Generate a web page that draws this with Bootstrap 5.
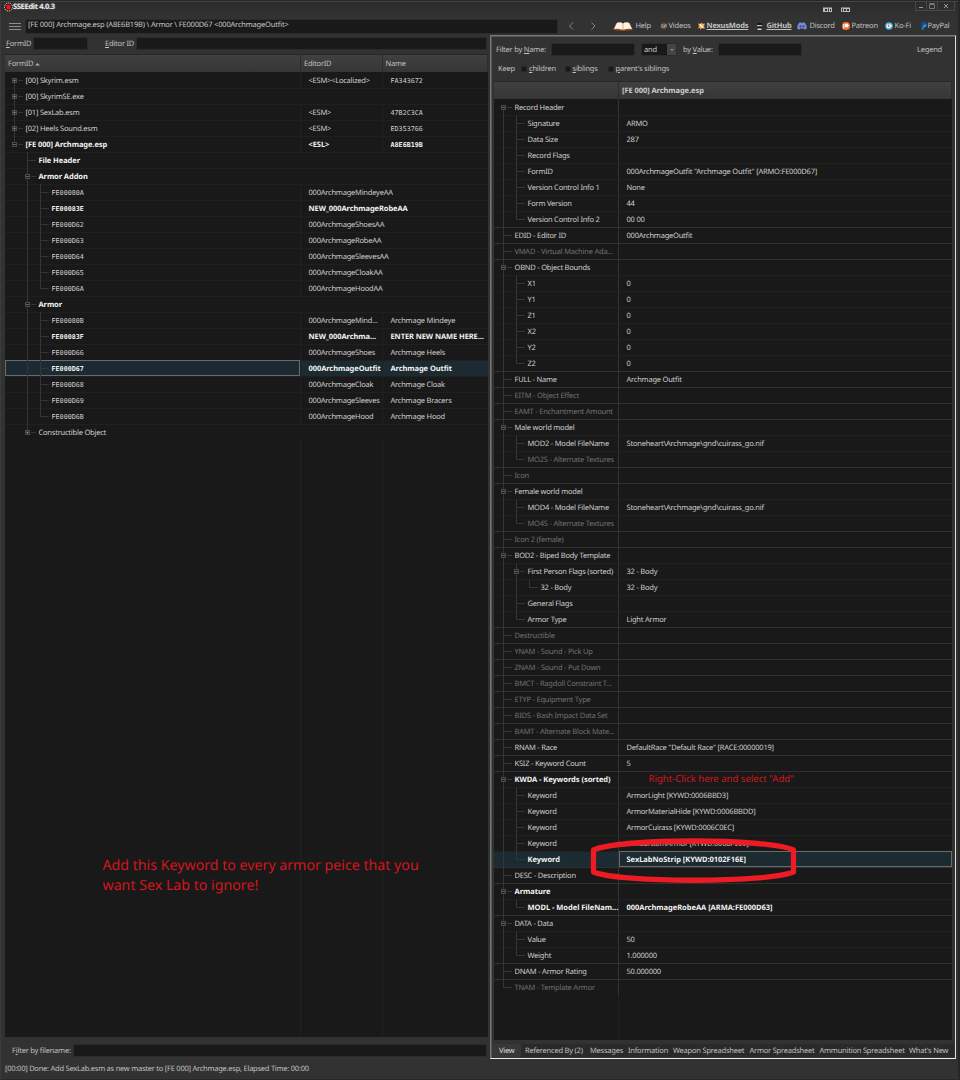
<!DOCTYPE html>
<html lang="en" data-bs-theme="dark">
<head>
<meta charset="utf-8">
<title>SSEEdit 4.0.3</title>
<meta name="viewport" content="width=device-width, initial-scale=1">
<link href="https://cdn.jsdelivr.net/npm/bootstrap@5.3.0/dist/css/bootstrap.min.css" rel="stylesheet">
<style>
html,body{height:1080px;overflow:hidden}
body{background:#323232;color:#c0c0c0;font:7.5px/16px "Noto Sans","Open Sans",sans-serif;letter-spacing:-.215px;text-rendering:geometricPrecision}
.app{width:960px;height:1080px;border:1px solid #272727;border-right-width:2px;border-left-color:#3b3b3b}
.titlebar{height:17px;border-top:1px solid #444;background:linear-gradient(#2c2c2c,#323232);padding-left:3px}
.titlebar b{color:#e8e8e8;line-height:11px;text-shadow:0 0 2px #777;letter-spacing:-.32px}
.winbtns{height:9px;border:1px solid #474747;border-top:0;margin-right:3px;margin-left:63px}
.winbtns span{width:11px;border-right:1px solid #474747;display:flex;align-items:center;justify-content:center}
.winbtns span:last-child{width:16px;border:0}
.toolbar{height:16px;padding-left:8px}
.inset{background:#191919;border:1px solid #2b2b2b;height:13px}
.links{display:grid;grid-template-columns:47px 38px 58px 41px 45px 43px 36px 32px;margin-left:15.500px;line-height:19px}
.links span{display:flex;align-items:center;white-space:nowrap}
.links svg{flex:none}
.leftpane{width:483px;margin-left:4px}
.rightpane{width:466px;height:1024px;border:1px solid #777;border-right-color:#ddd;border-bottom-color:#eee;box-shadow:inset 1px 1px #555;padding:0 3px;margin-left:2px}
.hd{height:18px;background:linear-gradient(#404040,#363636);border-top:1px solid #272727}
.hd>div{border-right:1px solid #2c2c2c;line-height:18px}
.grid{background:#191919;position:relative;overflow:hidden}
.lcols{display:grid;grid-template-columns:296px 82px 1fr}
.rcols{display:grid;grid-template-columns:125px 1fr}
.trow{height:16px;border-top:1px solid #202020;white-space:nowrap;color:#cecece;min-width:0}
.trow:first-child{border-top-color:transparent}
.trow>div{display:flex;min-width:0;margin-top:-1px;height:16px}
.lcols.trow>div,.rcols.trow>div,.fill>div{border-right:1px solid #212121}
.rcols.trow>div{border-right-color:#333}
.trow>div:last-child,.fill>div:last-child{border-right:0!important}
.trow.span>div{border-right-color:transparent!important}
.trow .val{padding-left:7.500px}
.trow .t{flex:1;line-height:18px}
.top{border-top-color:#303030}
.boldrow{font-weight:700;color:#f2f2f2;letter-spacing:-.08px}
#rec .boldrow{letter-spacing:-.03px}
.off{color:#717171}
.hot{background:#1c2a31}
.focus{box-shadow:inset 0 0 0 1px #686b6c}
.mono{font-family:"DejaVu Sans Mono",monospace;font-size:6.73px;letter-spacing:0}
.g{width:13px;height:16px;flex:none;background-repeat:no-repeat;display:flex;align-items:center}
.g.vf{background-image:linear-gradient(#353535,#353535);background-size:1px 16px;background-position:4px 0}
.g.vt{background-image:linear-gradient(#353535,#353535);background-size:1px 9px;background-position:4px 0}
.g.vb{background-image:linear-gradient(#353535,#353535);background-size:1px 8px;background-position:4px 8px}
.g i{display:block;height:1px;background:#353535;width:8px;margin:1px 0 0 5px}
.g b{width:5px;height:5px;border:1px solid #4b4b4b;background:#191919;margin:1px 0 0 2px;font-size:0;display:flex;align-items:center;justify-content:center}
.g b::after{content:"";width:3px;height:1px;background:#666}
.g b.plus::after{width:1px;height:1px;background:#aaa;box-shadow:0 0 0 .5px #777}
.g b+i{width:5px;margin-left:1px}
.padl,.padr{width:5px;flex:none}
.padl+.g{margin-left:.5px}.padl{width:4.500px}
.padr+.g{margin-left:0}
.g+.t{padding-left:2.500px}
.wide{grid-column:2/4}
.chk{width:6px;height:6px;background:#181818;border:1px solid #282828;margin-right:2px}
.tabbar{display:grid;grid-template-columns:30px 65px 38px 45px 76.5px 70px 89.5px 1fr;background:#2a2a2a;height:13px;line-height:14px;margin:4px -2px 0;white-space:nowrap}
.tabbar span:first-child{background:#383838;color:#ddd;padding-left:7px;margin-right:1px}
.tabbar span{padding-left:3px;height:13px}
.note{position:absolute;color:#d3161d;letter-spacing:0;white-space:nowrap}
.ring{position:absolute;left:585px;top:832px}
.address{width:533px;height:15px;line-height:11px;padding-left:2px;color:#c8c8c8;letter-spacing:-.18px}
</style>
</head>
<body>
<div class="app d-flex flex-column position-relative">
  <div class="titlebar d-flex">
    <svg width="9" height="10" viewBox="0 0 9 10"><circle cx="4.500" cy="5" r="4" fill="#4a1115" stroke="#ddd" stroke-dasharray="1.4 .8"/><path d="M2 4q2.500-3 5 0l-1 3.500h-3z" fill="#e01825"/></svg>
    <b>SSEEdit 4.0.3</b>
    <svg class="ms-auto" width="30" height="16"><path fill="#bbb" d="M1 5.500h9v4.500H1zM19 5.500h9v4.500h-9z"/><path fill="#333" d="M3 7h2v2H3zM6 6.500h1v3H6zM8 7h1v2H8zM20 6.500h1v3h-1zM22 7h2v2h-2zM25 7h2v2h-2z"/></svg>
    <div class="winbtns d-flex">
      <span><svg width="5" height="6"><path stroke="#999" d="M0 4.500h4"/></svg></span>
      <span><svg width="7" height="6"><path fill="none" stroke="#777" d="M.5 1.500h5v4h-5zM.5 .5h5"/></svg></span>
      <span><svg width="6" height="6"><path fill="none" stroke="#999" d="M1 1l4 4M5 1l-4 4"/></svg></span>
    </div>
  </div>
  <div class="toolbar d-flex align-items-center">
    <svg width="12" height="9"><path stroke="#999" stroke-width=".9" d="M0 1.500h12M0 4.500h12M0 7.500h12"/></svg>
    <div class="inset ms-1 address">[FE 000] Archmage.esp (A8E6B19B) \ Armor \ FE000D67 &lt;000ArchmageOutfit&gt;</div>
    <svg width="31" height="10" class="ms-2"><path fill="none" stroke="#999" stroke-width=".8" d="M7 1.500L3.500 5 7 8.500M25.500 1.500L29 5 25.500 8.500"/></svg>
    <div class="links">
      <span><svg width="20" height="9" viewBox="0 0 20 9" style="margin-right:3px"><path fill="#8b4c25" d="M0 8L3 1h14l3 7-9 1H9z"/><path fill="#fff3df" d="M1 7L4 .7Q8-.5 9.800 1.500V7.800Q5 6 1 7zM10.200 1.500Q12-.5 16 .7L19 7Q15 6 10.200 7.800z"/></svg>Help</span>
      <span><svg width="8" height="8" style="margin-right:1px"><circle cx="4" cy="4" r="3.400" fill="#57483c"/><path fill="none" stroke="#b9a694" stroke-width=".8" d="M3.500 2.700H1.700v2.600h1.700V4M4.700 6V2.700H6.300v1.600H4.700"/></svg>Videos</span>
      <span><svg width="7" height="8" viewBox="0 0 8 8" style="margin-right:2px"><path fill="#eb9b43" d="M0 1l3 .5L4 0l1.500 1.500L8 1 7 4l1 3-3-.5L3 8l-1-2-2 1 1-3z"/><path stroke="#fff" stroke-width="1.300" d="M2 2l4 4"/><path stroke="#fbe3c4" d="M6 2L2 6"/></svg><u class="fw-bold">NexusMods</u></span>
      <span><svg width="8" height="9" style="margin-right:3px"><path fill="#15191c" d="M1 1h5v2H1z"/><path fill="#e8b49b" d="M1 3h5v1.500H1z"/><path fill="#15191c" d="M1 4.500h5V6H1z"/><path fill="#b6dce8" d="M1.500 6.500h4v1.500h-4z"/></svg><u class="fw-bold">GitHub</u></span>
      <span><svg width="10" height="8" viewBox="0 0 10 8" style="margin-right:3px"><path fill="#7289da" d="M2 .7L4 .2l.3.8h1.400l.3-.8 2 .5Q10 3.500 9.800 6.500L7.500 7.800 6.800 6.600H3.200L2.500 7.800.2 6.500Q0 3.500 2 .7z"/><circle cx="3.500" cy="4.300" r=".9" fill="#333"/><circle cx="6.500" cy="4.300" r=".9" fill="#333"/></svg>Discord</span>
      <span><svg width="8" height="8" style="margin-right:2px"><rect width="8" height="8" rx="3.800" fill="#f96d2a"/><circle cx="4.600" cy="3.500" r="2" fill="#fff"/><path fill="#fff" d="M1.300 1.800h1v5h-1z"/></svg>Patreon</span>
      <span><svg width="8" height="8" style="margin-right:2px"><circle cx="4" cy="4" r="3.800" fill="#4fb4df"/><path fill="#fff" d="M1.500 2.500h4.500l1 1-1 1.500H5.500l-.5 1H2z"/><circle cx="3.700" cy="4" r=".9" fill="#e55"/></svg>Ko-Fi</span>
      <span><svg width="6" height="8" style="margin-right:1px"><path fill="#174e9b" d="M1 0h3q2 0 1.500 2.500T3 5L2.500 7H0z"/><path fill="#1aa0df" d="M2.500 3l3.200-.6q0 2.800-3 2.800L2.200 8H1z"/></svg>PayPal</span>
    </div>
  </div>
  <div class="d-flex" style="height:1024px;margin-top:1px">
    <div class="leftpane">
      <div class="d-flex align-items-center" style="height:19px;padding:0 1px 2px 1px">
        <span style="width:27px;padding-top:1px"><u>F</u>ormID</span><div class="inset" style="width:55px"></div>
        <span style="margin-left:17px;width:31px;padding-top:1px"><u>E</u>ditor ID</span><div class="inset flex-fill"></div>
      </div>
      <div class="hd lcols"><div style="padding-left:3px">FormID <svg width="5" height="4"><path fill="#aaa" d="M0 3.500L2.500 1 5 3.500z"/></svg></div><div style="padding-left:3px">EditorID</div><div style="padding-left:2.500px">Name</div></div>
      <div class="grid d-flex flex-column" style="height:965px"><div id="nav"></div><div class="fill lcols flex-fill"><div></div><div></div><div></div></div></div>
      <div class="d-flex align-items-center" style="height:15px;margin-top:6px;padding:0 1px 0 7px"><span style="width:61px">F<u>i</u>lter by filename:</span><div class="inset flex-fill"></div></div>
    </div>
    <div class="rightpane">
      <div class="d-flex align-items-center" style="height:22px;padding:4px 10px 0 2px">
        <span style="width:55px;padding-top:2px">Filter by <u>N</u>ame:</span><div class="inset" style="width:84px"></div>
        <div class="inset d-flex" style="width:36px;margin-left:6px;line-height:12px;padding-left:2px;color:#ccc">and<svg class="ms-auto" width="9" height="11"><path fill="#444" d="M0 0h9v11H0z"/><path fill="#888" d="M3 5h4L5 7z"/></svg></div>
        <span style="margin-left:6px;width:35px;padding-top:2px">by <u>V</u>alue:</span><div class="inset" style="width:84px"></div><span class="ms-auto" style="padding-top:2px">Legend</span>
      </div>
      <div class="d-flex align-items-center" style="height:22px;padding-left:4px;margin-bottom:1px;line-height:15px">
        <span style="width:23px">Keep</span>
        <i class="chk"></i><span style="width:35.500px"><u>c</u>hildren</span>
        <i class="chk"></i><span style="width:35px"><u>s</u>iblings</span>
        <i class="chk"></i><span><u>p</u>arent's siblings</span>
      </div>
      <div class="hd rcols"><div></div><div class="fw-bold" style="padding-left:3px;color:#ccc;letter-spacing:-.07px;line-height:19px">[FE 000] Archmage.esp</div></div>
      <div class="grid d-flex flex-column" style="height:941px"><div id="rec"></div><div class="fill rcols flex-fill"><div></div><div></div></div></div>
      <div class="tabbar"><span>View</span><span>Referenced By (2)</span><span>Messages</span><span>Information</span><span>Weapon Spreadsheet</span><span>Armor Spreadsheet</span><span>Ammunition Spreadsheet</span><span>What's New</span></div>
    </div>
  </div>
  <div style="padding:2px 0 0 4px;letter-spacing:-.24px">[00:00] Done: Add SexLab.esm as new master to [FE 000] Archmage.esp, Elapsed Time: 00:00</div>

  <div class="note" style="left:647.500px;top:770px;font-size:9.550px">Right-Click here and select "Add"</div>
  <div class="note" style="left:101.500px;top:855px;font-size:14.200px;line-height:20px">Add this Keyword to every armor peice that you<br>want Sex Lab to ignore!</div>
  <svg class="ring" width="215" height="56" viewBox="586 833 215 56"><path d="M593.500 850C620 838 766 838 793.500 850V872C766 883 620 883 593.500 872Z" fill="none" stroke="#ed1c24" stroke-width="5.300" stroke-linejoin="round"/></svg>
</div>
<script>
// Each row: level, marker, label, [values], flags (b bold, o unused, h highlighted, s spanning, m monospaced label)
const nav=[
[0,'+','[00] Skyrim.esm',['<ESM><Localized>','FA343672']],
[0,'+','[00] SkyrimSE.exe',[],'s'],
[0,'+','[01] SexLab.esm',['<ESM>','47B2C3CA']],
[0,'+','[02] Heels Sound.esm',['<ESM>','ED353766']],
[0,'-','[FE 000] Archmage.esp',['<ESL>','A8E6B19B'],'b'],
[1,'','File Header',[],'bs'],
[1,'-','Armor Addon',[],'bs'],
[2,'','FE00080A',['000ArchmageMindeyeAA'],'m'],
[2,'','FE00083E',['NEW_000ArchmageRobeAA'],'mb'],
[2,'','FE000D62',['000ArchmageShoesAA'],'m'],
[2,'','FE000D63',['000ArchmageRobeAA'],'m'],
[2,'','FE000D64',['000ArchmageSleevesAA'],'m'],
[2,'','FE000D65',['000ArchmageCloakAA'],'m'],
[2,'','FE000D6A',['000ArchmageHoodAA'],'m'],
[1,'-','Armor',[],'bs'],
[2,'','FE00080B',['000ArchmageMind...','Archmage Mindeye'],'m'],
[2,'','FE00083F',['NEW_000Archma...','ENTER NEW NAME HERE...'],'mb'],
[2,'','FE000D66',['000ArchmageShoes','Archmage Heels'],'m'],
[2,'','FE000D67',['000ArchmageOutfit','Archmage Outfit'],'mbh'],
[2,'','FE000D68',['000ArchmageCloak','Archmage Cloak'],'m'],
[2,'','FE000D69',['000ArchmageSleeves','Archmage Bracers'],'m'],
[2,'','FE000D6B',['000ArchmageHood','Archmage Hood'],'m'],
[1,'+','Constructible Object',[],'s']];
const rec=[
[0,'-','Record Header'],[1,'','Signature',['ARMO']],[1,'','Data Size',['287']],[1,'','Record Flags'],
[1,'','FormID',['000ArchmageOutfit "Archmage Outfit" [ARMO:FE000D67]']],
[1,'','Version Control Info 1',['None']],[1,'','Form Version',['44']],[1,'','Version Control Info 2',['00 00']],
[0,'','EDID - Editor ID',['000ArchmageOutfit']],[0,'','VMAD - Virtual Machine Ada...',[],'o'],
[0,'-','OBND - Object Bounds'],[1,'','X1',['0']],[1,'','Y1',['0']],[1,'','Z1',['0']],[1,'','X2',['0']],[1,'','Y2',['0']],[1,'','Z2',['0']],
[0,'','FULL - Name',['Archmage Outfit']],[0,'','EITM - Object Effect',[],'o'],[0,'','EAMT - Enchantment Amount',[],'o'],
[0,'-','Male world model'],[1,'','MOD2 - Model FileName',['Stoneheart\\Archmage\\gnd\\cuirass_go.nif']],[1,'','MO2S - Alternate Textures',[],'o'],
[0,'','Icon',[],'o'],
[0,'-','Female world model'],[1,'','MOD4 - Model FileName',['Stoneheart\\Archmage\\gnd\\cuirass_go.nif']],[1,'','MO4S - Alternate Textures',[],'o'],
[0,'','Icon 2 (female)',[],'o'],
[0,'-','BOD2 - Biped Body Template'],[1,'-','First Person Flags (sorted)',['32 - Body']],[2,'','32 - Body',['32 - Body']],[1,'','General Flags'],[1,'','Armor Type',['Light Armor']],
[0,'','Destructible',[],'o'],[0,'','YNAM - Sound - Pick Up',[],'o'],[0,'','ZNAM - Sound - Put Down',[],'o'],[0,'','BMCT - Ragdoll Constraint T...',[],'o'],
[0,'','ETYP - Equipment Type',[],'o'],[0,'','BIDS - Bash Impact Data Set',[],'o'],[0,'','BAMT - Alternate Block Mate...',[],'o'],
[0,'','RNAM - Race',['DefaultRace "Default Race" [RACE:00000019]']],[0,'','KSIZ - Keyword Count',['5']],
[0,'-','KWDA - Keywords (sorted)',[],'b'],[1,'','Keyword',['ArmorLight [KYWD:0006BBD3]']],[1,'','Keyword',['ArmorMaterialHide [KYWD:0006BBDD]']],
[1,'','Keyword',['ArmorCuirass [KYWD:0006C0EC]']],[1,'','Keyword',['VendorItemArmor [KYWD:0008F959]']],[1,'','Keyword',['SexLabNoStrip [KYWD:0102F16E]'],'bh'],
[0,'','DESC - Description'],[0,'-','Armature',[],'b'],[1,'','MODL - Model FileNam...',['000ArchmageRobeAA [ARMA:FE000D63]'],'b'],
[0,'-','DATA - Data'],[1,'','Value',['50']],[1,'','Weight',['1.000000']],[0,'','DNAM - Armor Rating',['50.000000']],[0,'','TNAM - Template Armor',[],'o']];
const esc=s=>s.replace(/&/g,'&amp;').replace(/</g,'&lt;').replace(/>/g,'&gt;');
function sibling(d,i,l){for(let k=i+1;k<d.length;k++){if(d[k][0]<l)return false;if(d[k][0]===l)return true}return false}
function build(id,d,cols,left){
 document.getElementById(id).innerHTML=d.map((r,i)=>{
  const [l,m,text,vals=[],f='']=r;let g='';
  for(let k=0;k<=l;k++){
   const more=sibling(d,i,k),own=k===l;
   const v=own?(i===0?'vb':more?'vf':'vt'):(more?'vf':'');
   g+=`<span class="g ${v}">${own?(m?`<b class="${m==='+'?'plus':''}"></b>`:'')+'<i></i>':''}</span>`;
  }
  const hot=f.includes('h');
  let h=`<div class="${hot&&left?'focus':''}"><span class="${left?'padl':'padr'}"></span>${g}<span class="t ${f.includes('m')?'mono':''}">${esc(text)}</span></div>`;
  // an empty name column lets the editor id run across both cells
  const wide=left&&l===2&&vals.length===1;
  for(let c=0;c<(left&&!wide?2:1);c++)h+=`<div class="val ${wide?'wide':''} ${hot&&!left?'focus':''}"><span class="t ${left&&c&&l===0?'mono':''}">${esc(vals[c]||'')}</span></div>`;
  return `<div class="trow ${cols} ${!left&&l===0?'top':''} ${f.includes('b')?'boldrow':''} ${f.includes('o')?'off':''} ${hot?'hot':''} ${f.includes('s')?'span':''}">${h}</div>`;
 }).join('');
}
build('nav',nav,'lcols',true);build('rec',rec,'rcols',false);
</script>
</body>
</html>
